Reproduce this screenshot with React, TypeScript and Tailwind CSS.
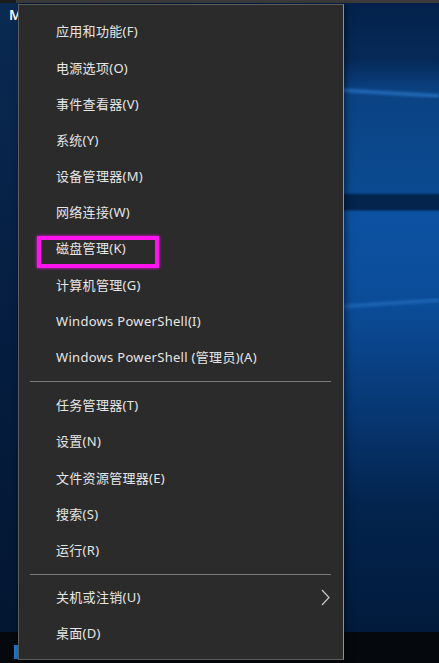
import React from "react";

const groups: { label: string; sub?: boolean }[][] = [
  [
    { label: "应用和功能(F)" },
    { label: "电源选项(O)" },
    { label: "事件查看器(V)" },
    { label: "系统(Y)" },
    { label: "设备管理器(M)" },
    { label: "网络连接(W)" },
    { label: "磁盘管理(K)" },
    { label: "计算机管理(G)" },
    { label: "Windows PowerShell(I)" },
    { label: "Windows PowerShell (管理员)(A)" },
  ],
  [
    { label: "任务管理器(T)" },
    { label: "设置(N)" },
    { label: "文件资源管理器(E)" },
    { label: "搜索(S)" },
    { label: "运行(R)" },
  ],
  [{ label: "关机或注销(U)", sub: true }, { label: "桌面(D)" }],
];

function Wallpaper() {
  return (
    <svg className="absolute inset-0" width="439" height="663" viewBox="0 0 439 663">
      <defs>
        <linearGradient id="wv" x1="0" y1="0" x2="0" y2="1">
          <stop offset="0" stopColor="#03214a" />
          <stop offset="0.09" stopColor="#062a58" />
          <stop offset="0.14" stopColor="#0b4384" />
          <stop offset="0.29" stopColor="#0b4a90" />
          <stop offset="0.295" stopColor="#04244e" />
          <stop offset="0.315" stopColor="#04244e" />
          <stop offset="0.32" stopColor="#0c52a2" />
          <stop offset="0.46" stopColor="#0b4c98" />
          <stop offset="0.6" stopColor="#083a78" />
          <stop offset="0.76" stopColor="#03244e" />
          <stop offset="0.95" stopColor="#021b3c" />
        </linearGradient>
        <linearGradient id="wh" x1="0" y1="0" x2="1" y2="0">
          <stop offset="0" stopColor="#020f24" stopOpacity="0.75" />
          <stop offset="0.5" stopColor="#020f24" stopOpacity="0.35" />
          <stop offset="0.8" stopColor="#020f24" stopOpacity="0" />
        </linearGradient>
        <linearGradient id="wl" x1="0" y1="0" x2="0" y2="1">
          <stop offset="0" stopColor="#0a2a52" />
          <stop offset="0.5" stopColor="#051d40" />
          <stop offset="1" stopColor="#031630" />
        </linearGradient>
        <filter id="bl">
          <feGaussianBlur stdDeviation="1.5" />
        </filter>
      </defs>
      <rect width="439" height="663" fill="url(#wv)" />
      <path d="M200 82 L439 96" stroke="#2f7fd0" strokeWidth="3" filter="url(#bl)" opacity="0.8" />
      <path d="M200 316 L439 300" stroke="#2e7fd2" strokeWidth="3" filter="url(#bl)" opacity="0.6" />
      <rect width="439" height="663" fill="url(#wh)" />
      <rect x="0" y="0" width="20" height="663" fill="url(#wl)" />
      <rect y="632" width="439" height="31" fill="#05080d" />
      <rect x="14" y="645" width="5" height="14" fill="#1e78c8" />
      <rect x="0" y="0" width="439" height="3" fill="#3b3b3b" />
      <rect x="0" y="0" width="16" height="3" fill="#1c1c1c" />
    </svg>
  );
}

function Chevron() {
  return (
    <svg width="9" height="17" viewBox="0 0 9 17" fill="none">
      <path d="M1 1 L8 8.5 L1 16" stroke="#c8c8c8" strokeWidth="1.2" />
    </svg>
  );
}

export default function App() {
  return (
    <div
      className="relative w-[439px] h-[663px] overflow-hidden"
      style={{ fontFamily: '"Noto Sans", "Noto Sans CJK SC", sans-serif' }}
    >
      <Wallpaper />
      <div className="absolute left-[9px] top-[4px] text-[14px] font-semibold text-white">M</div>

      <div className="relative pt-[4px]">
        <div className="ml-[18px] w-[326px] h-[656px] bg-[#2b2b2b] border border-[#5c5c5c] border-r-[#8c9196] pt-[9px] shadow-[2px_2px_6px_rgba(0,0,0,0.5)]">
          {groups.map((g, gi) => (
            <div key={gi}>
              {gi > 0 && (
                <div className={`flex items-center ${gi === 1 ? "h-[12px]" : "h-[11px]"}`}>
                  <div className="ml-[11px] mr-[12px] flex-1 h-px bg-[#7a7a7a]" />
                </div>
              )}
              {g.map((it) => (
                <div
                  key={it.label}
                  className="h-[36.2px] flex items-center justify-between pl-[37px] pr-[13px] text-[13px] tracking-[0.3px] text-[#e6e6e6]"
                >
                  <span>{it.label}</span>
                  {it.sub && <Chevron />}
                </div>
              ))}
            </div>
          ))}
        </div>
      </div>

      <div className="absolute left-[37px] top-[236px] w-[122px] h-[32px] border-[4px] border-[#ff14f0] shadow-[0_0_3px_#ff14f0]" />
    </div>
  );
}
